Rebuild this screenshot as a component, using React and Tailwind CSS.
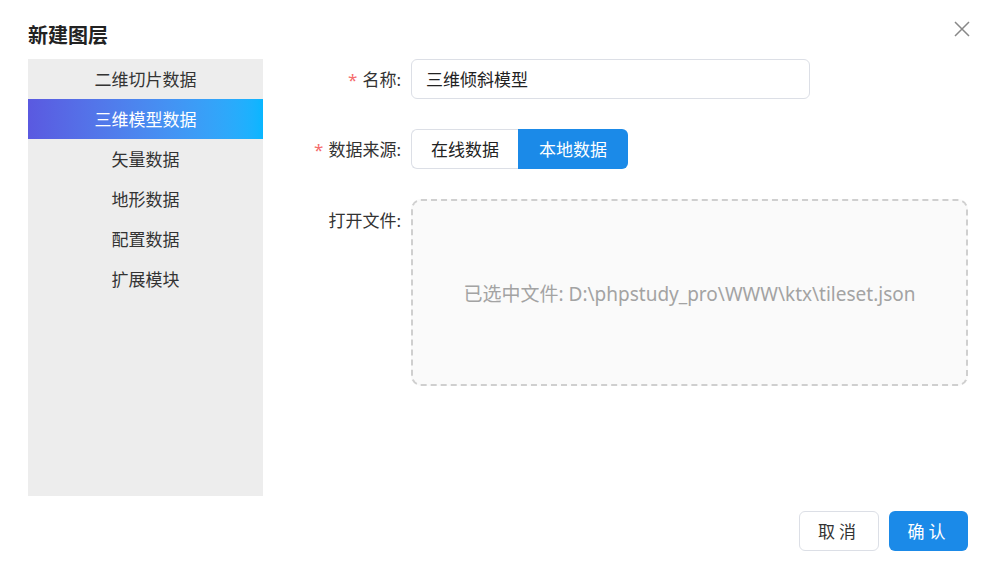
import React from "react";

const items = ["二维切片数据", "三维模型数据", "矢量数据", "地形数据", "配置数据", "扩展模块"];

export default function App() {
  return (
    <div
      className="relative w-[996px] h-[570px] bg-white text-[#333]"
      style={{ fontFamily: '"Noto Sans", "Noto Sans CJK SC", sans-serif' }}
    >
      <div className="absolute right-[25px] top-[20px] text-[#888]">
        <svg width="18" height="18" viewBox="0 0 18 18" fill="none" stroke="currentColor" strokeWidth="1.5">
          <path d="M2 2L16 16M16 2L2 16" />
        </svg>
      </div>
      <div className="px-[28px] pt-[22px] flex flex-col">
        <h1 className="text-[20px] font-bold leading-[28px] text-[#222] h-[37px]">新建图层</h1>
        <div className="flex">
          <div className="w-[235px] h-[437px] bg-[#ededed] flex flex-col">
            {items.map((t, i) => (
              <div
                key={t}
                className={
                  i === 1
                    ? "h-[40px] flex items-center justify-center pt-[2px] text-[17px] text-white bg-gradient-to-r from-[#5a59e0] to-[#08b6ff]"
                    : "h-[40px] flex items-center justify-center pt-[2px] text-[17px] text-[#333]"
                }
              >
                {t}
              </div>
            ))}
          </div>
          <div className="flex-1 flex flex-col gap-[30px] pl-[40px]">
            <div className="flex items-center">
              <div className="w-[108px] pr-[10px] pt-[2px] text-right text-[17px] text-[#333]">
                <span className="text-[#f56c6c] mr-[5px]">*</span>名称:
              </div>
              <div className="w-[399px] h-[40px] border border-[#dcdfe6] rounded-[6px] flex items-center pt-[2px] px-[14px] text-[17px] text-[#222]">
                三维倾斜模型
              </div>
            </div>
            <div className="flex items-center">
              <div className="w-[108px] pr-[10px] pt-[2px] text-right text-[17px] text-[#333] whitespace-nowrap">
                <span className="text-[#f56c6c] mr-[5px]">*</span>数据来源:
              </div>
              <div className="flex h-[40px]">
                <div className="w-[107px] h-[40px] border border-[#dcdfe6] border-r-0 rounded-l-[6px] flex items-center justify-center pt-[2px] text-[17px] text-[#222]">
                  在线数据
                </div>
                <div className="w-[110px] h-[40px] bg-[#1b8ae8] rounded-r-[6px] flex items-center justify-center pt-[2px] text-[17px] text-white">
                  本地数据
                </div>
              </div>
            </div>
            <div className="flex items-start">
              <div className="w-[108px] pr-[10px] text-right text-[17px] text-[#333] pt-[9px]">打开文件:</div>
              <div className="w-[557px] h-[187px] border-2 border-dashed border-[#cfcfcf] rounded-[10px] bg-[#fafafa] flex items-center justify-center pt-[4px] text-[19px] text-[#a3a3a3]">
                已选中文件: D:\phpstudy_pro\WWW\ktx\tileset.json
              </div>
            </div>
          </div>
        </div>
        <div className="flex justify-end gap-[10px] mt-[15px]">
          <button className="w-[80px] h-[40px] border border-[#dcdfe6] rounded-[6px] bg-white pt-[2px] text-[17px] text-[#333] tracking-[4px]">
            取消
          </button>
          <button className="w-[79px] h-[40px] rounded-[6px] bg-[#1b8ae8] pt-[2px] text-[17px] text-white tracking-[4px]">
            确认
          </button>
        </div>
      </div>
    </div>
  );
}
